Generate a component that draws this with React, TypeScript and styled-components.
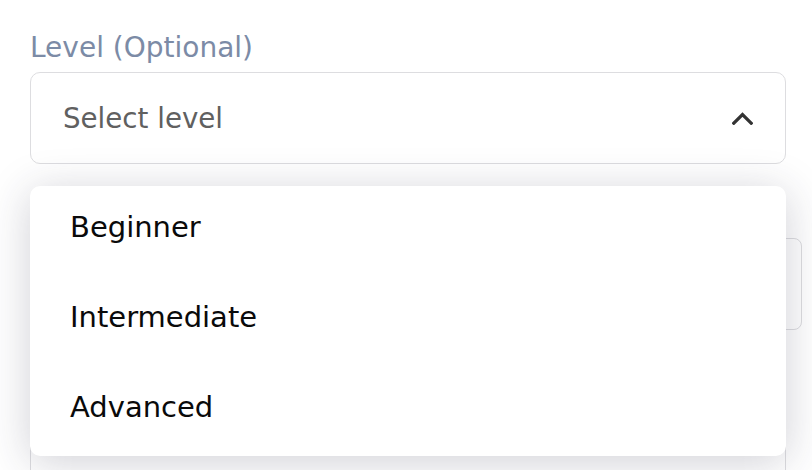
import styled, { createGlobalStyle } from 'styled-components'

const GlobalStyle = createGlobalStyle`
  html, body {
    margin: 0;
    padding: 0;
    background: #ffffff;
  }
  body {
    font-family: "DejaVu Sans", "Liberation Sans", sans-serif;
    -webkit-font-smoothing: antialiased;
  }
`

const Form = styled.div`
  display: flex;
  flex-direction: column;
  padding: 31px 26px 0 30px;
  width: 812px;
  height: 470px;
  box-sizing: border-box;
  overflow: hidden;
`

const Field = styled.div`
  position: relative;
  display: flex;
  flex-direction: column;
  row-gap: 8px;
  z-index: 2;
`

const Label = styled.label`
  color: rgb(124, 139, 166);
  font-size: 28px;
  line-height: 33px;
`

const SelectBox = styled.button`
  display: flex;
  align-items: center;
  justify-content: space-between;
  height: 92px;
  box-sizing: border-box;
  padding: 0 32px 0 32px;
  border: 1px solid rgb(221, 221, 224);
  border-radius: 10px;
  background: #ffffff;
  font-family: inherit;
  cursor: pointer;
`

const Placeholder = styled.span`
  color: rgb(96, 96, 96);
  font-size: 27.7px;
`

const Menu = styled.ul`
  position: absolute;
  top: 155px;
  left: 0;
  right: 0;
  margin: 0;
  padding: 0;
  list-style: none;
  background: #ffffff;
  border-radius: 10px;
  box-shadow: 0 6px 44px rgba(40, 40, 70, 0.22);
`

const Option = styled.li`
  display: flex;
  align-items: center;
  height: 90px;
  box-sizing: border-box;
  padding: 0 0 8px 40px;
  color: rgb(10, 10, 10);
  font-size: 29px;
`

const BackgroundBox = styled.div<{ $top: number; $height: number; $overhang?: number }>`
  margin-top: ${(p) => p.$top}px;
  margin-right: ${(p) => -(p.$overhang ?? 0)}px;
  height: ${(p) => p.$height}px;
  flex-shrink: 0;
  box-sizing: border-box;
  border: 1px solid rgb(221, 221, 224);
  border-radius: 8px;
  background: #ffffff;
`

function Chevron() {
  return (
    <svg width="21" height="13" viewBox="0 0 21 13" fill="none">
      <path d="M1.8 11.2 L10.5 2.6 L19.2 11.2" stroke="#333" strokeWidth="3.2" strokeLinecap="square" />
    </svg>
  )
}

const levels = ['Beginner', 'Intermediate', 'Advanced']

export default function App() {
  return (
    <>
      <GlobalStyle />
      <Form>
        <Field>
          <Label>Level (Optional)</Label>
          <SelectBox>
            <Placeholder>Select level</Placeholder>
            <Chevron />
          </SelectBox>
          <Menu>
            {levels.map((l) => (
              <Option key={l}>{l}</Option>
            ))}
          </Menu>
        </Field>
        <BackgroundBox $top={74} $height={92} $overhang={16} />
        <BackgroundBox $top={110} $height={92} />
      </Form>
    </>
  )
}
